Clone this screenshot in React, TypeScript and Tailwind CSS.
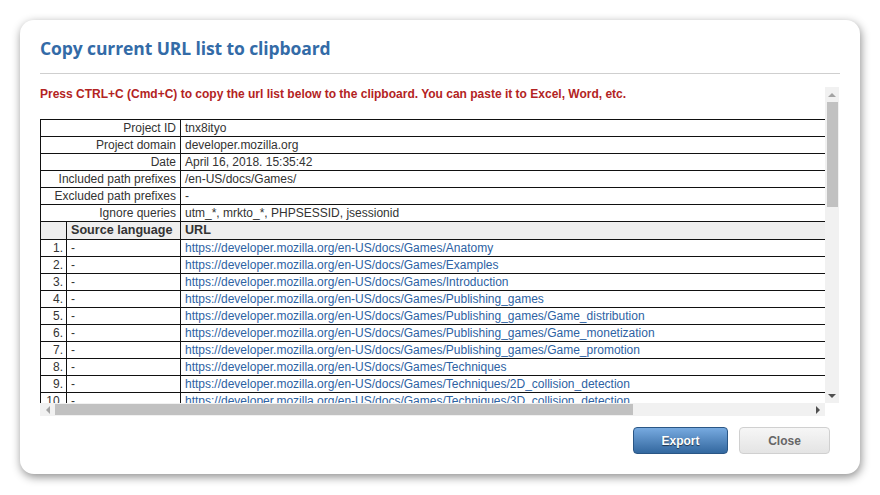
const meta: [string, string][] = [
    ["Project ID", "tnx8ityo"],
    ["Project domain", "developer.mozilla.org"],
    ["Date", "April 16, 2018. 15:35:42"],
    ["Included path prefixes", "/en-US/docs/Games/"],
    ["Excluded path prefixes", "-"],
    ["Ignore queries", "utm_*, mrkto_*, PHPSESSID, jsessionid"],
];

const base = "https://developer.mozilla.org/en-US/docs/Games/";
const urls = [
    "Anatomy",
    "Examples",
    "Introduction",
    "Publishing_games",
    "Publishing_games/Game_distribution",
    "Publishing_games/Game_monetization",
    "Publishing_games/Game_promotion",
    "Techniques",
    "Techniques/2D_collision_detection",
    "Techniques/3D_collision_detection",
    "Techniques/Audio_for_Web_Games",
];

const td = "border border-[#111] py-px leading-[14px]";

const VScroll = () => (
    <div className="flex w-[14px] flex-col items-center bg-[#f1f1f1]">
        <div className="flex h-[15px] items-center justify-center">
            <div className="h-0 w-0 border-x-[4px] border-b-[4px] border-x-transparent border-b-[#a3a3a3]" />
        </div>
        <div className="h-[105px] w-[11px] bg-[#c1c1c1]" />
        <div className="flex-1" />
        <div className="flex h-[15px] items-center justify-center">
            <div className="h-0 w-0 border-x-[4px] border-t-[4px] border-x-transparent border-t-[#505050]" />
        </div>
    </div>
);

const HScroll = () => (
    <div className="flex h-[13px]">
        <div className="flex w-[785px] items-center bg-[#f1f1f1]">
            <div className="flex w-[15px] items-center justify-center">
                <div className="h-0 w-0 border-y-[4px] border-r-[4px] border-y-transparent border-r-[#a3a3a3]" />
            </div>
            <div className="h-[11px] w-[578px] bg-[#c1c1c1]" />
            <div className="flex-1" />
            <div className="flex w-[15px] items-center justify-center">
                <div className="h-0 w-0 border-y-[4px] border-l-[4px] border-y-transparent border-l-[#505050]" />
            </div>
        </div>
        <div className="w-[14px] bg-white" />
    </div>
);

const App = () => {
    return (
        <div className="min-h-screen bg-white p-5 font-['Liberation_Sans',Arial,sans-serif]">
            <div className="flex h-[454px] w-[840px] flex-col rounded-[14px] bg-white px-5 shadow-[1px_3px_10px_rgba(0,0,0,0.45)]">
                <h2 className="pt-[16px] font-['Open_Sans',sans-serif] text-[17.5px] font-bold leading-[24px] tracking-[-0.1px] text-[#336ba7]">
                    Copy current URL list to clipboard
                </h2>
                <div className="mt-[13px] border-t border-[#cfcfcf]" />
                <div className="mt-[13px] flex flex-col">
                    <div className="flex h-[316px]">
                        <div className="w-[785px] overflow-hidden">
                            <p className="text-[12px] font-bold leading-[14px] text-[#b32323]">
                                Press CTRL+C (Cmd+C) to copy the url list below to the clipboard. You can paste it to Excel, Word, etc.
                            </p>
                            <table className="mt-[18px] w-[1040px] border-collapse text-[12px] text-[#333]">
                                <colgroup>
                                    <col className="w-[26px]" />
                                    <col className="w-[114px]" />
                                    <col />
                                </colgroup>
                                <tbody>
                                    {meta.map(([label, value]) => (
                                        <tr key={label}>
                                            <td colSpan={2} className={`${td} pr-[4px] text-right`}>
                                                {label}
                                            </td>
                                            <td className={`${td} pl-[4px]`}>{value}</td>
                                        </tr>
                                    ))}
                                    <tr className="bg-[#eeeeee] text-[12.6px] font-bold">
                                        <td className={`${td} leading-[15px]`} />
                                        <td className={`${td} pl-[4px] leading-[15px]`}>Source language</td>
                                        <td className={`${td} pl-[4px] leading-[15px]`}>URL</td>
                                    </tr>
                                    {urls.map((u, i) => (
                                        <tr key={u}>
                                            <td className={`${td} pr-[3px] text-right`}>{i + 1}.</td>
                                            <td className={`${td} pl-[4px]`}>-</td>
                                            <td className={`${td} pl-[4px] text-[#2d62a3]`}>
                                                {base + u}
                                            </td>
                                        </tr>
                                    ))}
                                </tbody>
                            </table>
                        </div>
                        <VScroll />
                    </div>
                    <HScroll />
                </div>
                <div className="mt-[11px] flex justify-end gap-[11px] pr-[10px]">
                    <button className="h-[27px] w-[95px] rounded-[4px] border border-[#2a5685] bg-gradient-to-b from-[#77aae0] to-[#33689f] text-[12px] font-bold text-white [text-shadow:0_1px_1px_rgba(0,0,0,0.6)]">
                        Export
                    </button>
                    <button className="h-[27px] w-[91px] rounded-[4px] border border-[#d0d0d0] bg-gradient-to-b from-[#f6f6f6] to-[#e4e4e4] text-[12px] font-bold text-[#666]">
                        Close
                    </button>
                </div>
            </div>
        </div>
    );
};

export default App;
